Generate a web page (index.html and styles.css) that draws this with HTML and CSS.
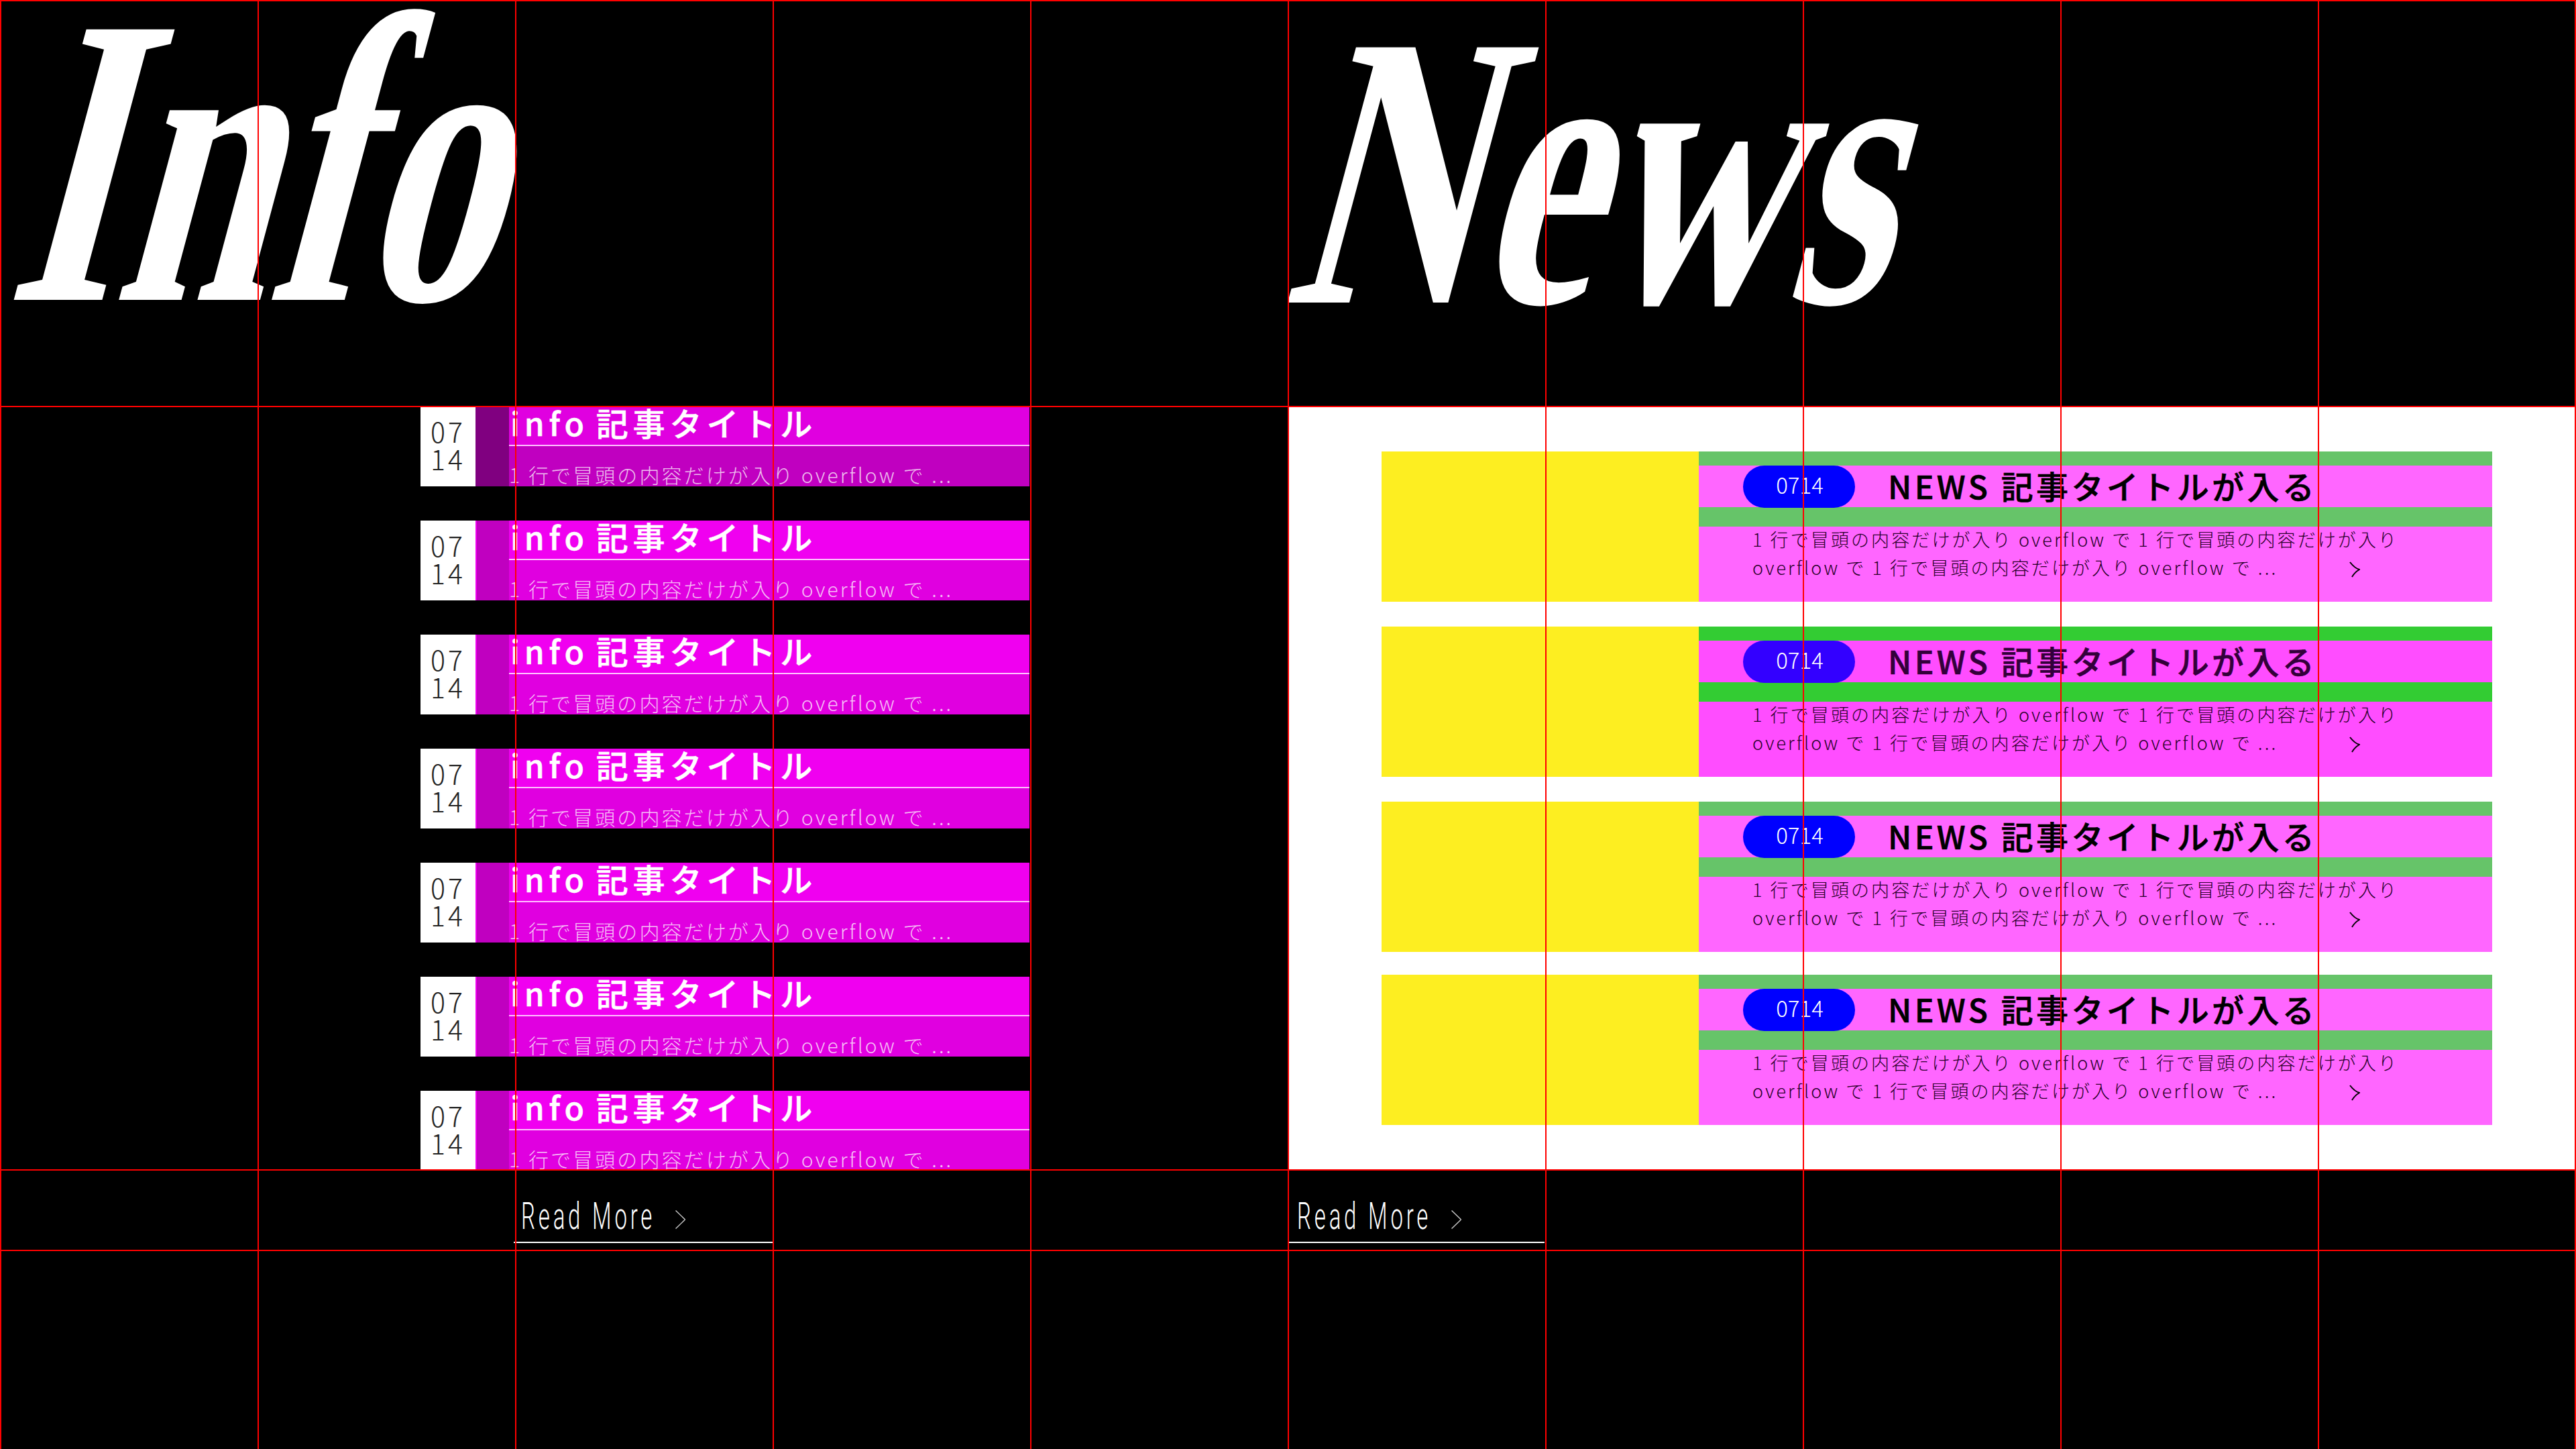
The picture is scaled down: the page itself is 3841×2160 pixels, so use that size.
FILE: index.html
```html
<!DOCTYPE html>
<html lang="ja">
<head>
  <meta charset="UTF-8">
  <title>Info / News</title>
  <link rel="stylesheet" href="styles.css">
</head>
<body>
  <div class="page">
    <section class="col col-info">
      <h2 class="big"><span class="big-info">Info</span></h2>
      <div class="info-body">
        <ul class="info-list">
          <li class="info-item first">
            <div class="date">07<br>14</div>
            <div class="side"></div>
            <div class="info-text">
              <div class="info-title">info 記事タイトル</div>
              <div class="info-desc">1 行で冒頭の内容だけが入り overflow で ...</div>
            </div>
          </li>
          <li class="info-item">
            <div class="date">07<br>14</div>
            <div class="side"></div>
            <div class="info-text">
              <div class="info-title">info 記事タイトル</div>
              <div class="info-desc">1 行で冒頭の内容だけが入り overflow で ...</div>
            </div>
          </li>
          <li class="info-item">
            <div class="date">07<br>14</div>
            <div class="side"></div>
            <div class="info-text">
              <div class="info-title">info 記事タイトル</div>
              <div class="info-desc">1 行で冒頭の内容だけが入り overflow で ...</div>
            </div>
          </li>
          <li class="info-item">
            <div class="date">07<br>14</div>
            <div class="side"></div>
            <div class="info-text">
              <div class="info-title">info 記事タイトル</div>
              <div class="info-desc">1 行で冒頭の内容だけが入り overflow で ...</div>
            </div>
          </li>
          <li class="info-item">
            <div class="date">07<br>14</div>
            <div class="side"></div>
            <div class="info-text">
              <div class="info-title">info 記事タイトル</div>
              <div class="info-desc">1 行で冒頭の内容だけが入り overflow で ...</div>
            </div>
          </li>
          <li class="info-item">
            <div class="date">07<br>14</div>
            <div class="side"></div>
            <div class="info-text">
              <div class="info-title">info 記事タイトル</div>
              <div class="info-desc">1 行で冒頭の内容だけが入り overflow で ...</div>
            </div>
          </li>
          <li class="info-item">
            <div class="date">07<br>14</div>
            <div class="side"></div>
            <div class="info-text">
              <div class="info-title">info 記事タイトル</div>
              <div class="info-desc">1 行で冒頭の内容だけが入り overflow で ...</div>
            </div>
          </li>
        </ul>
      </div>
      <a class="more more-info">
        <span class="more-label">Read More</span>
        <svg class="more-arrow" viewBox="0 0 15 28"><path d="M0.5 0.5 L14.5 14 L0.5 27.5"/></svg>
      </a>
    </section>

    <section class="col col-news">
      <h2 class="big"><span class="big-news">News</span></h2>
      <div class="news-body">
        <article class="news-item">
          <div class="thumb"></div>
          <div class="news-main">
            <div class="news-head">
              <span class="badge">0714</span>
              <span class="news-title">NEWS 記事タイトルが入る</span>
            </div>
            <div class="news-desc">
              <p>1 行で冒頭の内容だけが入り overflow で 1 行で冒頭の内容だけが入り<br>overflow で 1 行で冒頭の内容だけが入り overflow で ...</p>
              <svg class="news-arrow" viewBox="0 0 16 24"><path d="M1 1 Q8 10 15 12 Q8 16 4 23"/></svg>
            </div>
          </div>
        </article>
        <article class="news-item strong">
          <div class="thumb"></div>
          <div class="news-main">
            <div class="news-head">
              <span class="badge">0714</span>
              <span class="news-title">NEWS 記事タイトルが入る</span>
            </div>
            <div class="news-desc">
              <p>1 行で冒頭の内容だけが入り overflow で 1 行で冒頭の内容だけが入り<br>overflow で 1 行で冒頭の内容だけが入り overflow で ...</p>
              <svg class="news-arrow" viewBox="0 0 16 24"><path d="M1 1 Q8 10 15 12 Q8 16 4 23"/></svg>
            </div>
          </div>
        </article>
        <article class="news-item">
          <div class="thumb"></div>
          <div class="news-main">
            <div class="news-head">
              <span class="badge">0714</span>
              <span class="news-title">NEWS 記事タイトルが入る</span>
            </div>
            <div class="news-desc">
              <p>1 行で冒頭の内容だけが入り overflow で 1 行で冒頭の内容だけが入り<br>overflow で 1 行で冒頭の内容だけが入り overflow で ...</p>
              <svg class="news-arrow" viewBox="0 0 16 24"><path d="M1 1 Q8 10 15 12 Q8 16 4 23"/></svg>
            </div>
          </div>
        </article>
        <article class="news-item last">
          <div class="thumb"></div>
          <div class="news-main">
            <div class="news-head">
              <span class="badge">0714</span>
              <span class="news-title">NEWS 記事タイトルが入る</span>
            </div>
            <div class="news-desc">
              <p>1 行で冒頭の内容だけが入り overflow で 1 行で冒頭の内容だけが入り<br>overflow で 1 行で冒頭の内容だけが入り overflow で ...</p>
              <svg class="news-arrow" viewBox="0 0 16 24"><path d="M1 1 Q8 10 15 12 Q8 16 4 23"/></svg>
            </div>
          </div>
        </article>
      </div>
      <a class="more more-news">
        <span class="more-label">Read More</span>
        <svg class="more-arrow" viewBox="0 0 15 28"><path d="M0.5 0.5 L14.5 14 L0.5 27.5"/></svg>
      </a>
    </section>

    <!-- guide lines sit over everything -->
    <div class="guides-v">
      <i></i><i></i><i></i><i></i><i></i><i></i><i></i><i></i><i></i><i></i><i></i>
    </div>
    <div class="guides-h">
      <i class="h0"></i><i class="h1"></i><i class="h2"></i><i class="h3"></i>
    </div>
  </div>
</body>
</html>
```

FILE: styles.css
```css
* {
  box-sizing: border-box;
}

html, body {
  margin: 0;
  background: #000;
}

.page {
  position: relative;
  display: grid;
  grid-template-columns: 1920px 1921px;
  width: 3841px;
  height: 2160px;
  overflow: hidden;
  font-family: "Noto Sans CJK JP", "Noto Sans", sans-serif;
}

.col {
  display: flex;
  flex-direction: column;
}

/* big headings */
.big {
  height: 606px;
  margin: 0;
  font-family: "Liberation Serif", serif;
  font-weight: bold;
  color: #fff;
  overflow: hidden;
}

.big span {
  display: inline-block;
  line-height: 1;
}

.big-info {
  font-size: 616px;
  margin: -69px 0 0 -20px;
  transform: skewX(-15deg) scaleX(0.665);
  transform-origin: 0 100%;
}

.big-news {
  font-size: 581px;
  margin: -35px 0 0 -33px;
  transform: skewX(-15deg) scaleX(0.68);
  transform-origin: 0 100%;
}

/* info list */
.info-body {
  height: 1138px;
  padding-left: 627px;
  overflow: hidden;
}

.info-list {
  display: flex;
  flex-direction: column;
  gap: 51px;
  width: 908px;
  margin: 0;
  padding: 0;
  list-style: none;
}

.info-item {
  display: flex;
  height: 119px;
}

.date {
  width: 82px;
  padding-top: 16px;
  background: #fff;
  color: #222;
  font-size: 41px;
  font-weight: 200;
  line-height: 41px;
  letter-spacing: 4px;
  text-align: center;
}

.side {
  width: 50px;
  border-left: 2px solid #f000f0;
  background: #c000c0;
}

.info-item.first .side {
  border-left: 0;
  background: #800080;
}

.info-text {
  flex: 1;
  display: flex;
  flex-direction: column;
  overflow: hidden;
  background: #e000e0;
  color: #fff;
}

.info-item.first .info-text {
  background: #c000c0;
}

.info-title {
  flex: none;
  height: 59px;
  padding-left: 2px;
  border-bottom: 2px solid #ffc0ff;
  background: #f000f0;
  font-size: 48px;
  font-weight: 500;
  -webkit-text-stroke: 0.6px #fff;
  line-height: 46px;
  letter-spacing: 6.9px;
  word-spacing: -7px;
  white-space: nowrap;
}

.info-item.first .info-title {
  background: #e000e0;
}

.info-desc {
  flex: none;
  margin-top: 18px;
  color: rgba(255, 255, 255, 0.75);
  font-size: 30px;
  font-weight: 200;
  line-height: 48px;
  letter-spacing: 3.1px;
  white-space: nowrap;
}

/* news list */
.news-body {
  display: flex;
  flex-direction: column;
  gap: 37px;
  height: 1138px;
  margin-left: 2px;
  padding: 67px 125px 0 138px;
  background: #fff;
}

.news-item {
  display: flex;
  height: 224px;
}

.news-item.last {
  margin-top: -3px;
}

.thumb {
  width: 473px;
  background: #fdee21;
}

.news-main {
  flex: 1;
  display: flex;
  flex-direction: column;
  padding-top: 21px;
  background: #66c469;
}

.news-item.strong .news-main {
  background: #33cc33;
}

.news-head {
  display: flex;
  align-items: center;
  gap: 49px;
  height: 62px;
  padding-left: 66px;
  background: #ff66ff;
}

.news-item.strong .news-head {
  background: #ff4dff;
}

.badge {
  width: 167px;
  height: 63px;
  padding-left: 2px;
  border-radius: 32px;
  background: #0000ff;
  color: #fff;
  font-size: 33px;
  font-weight: 300;
  line-height: 57px;
  text-align: center;
}

.news-item.strong .badge {
  background: #3300ff;
}

.news-title {
  margin-bottom: 5px;
  color: #000;
  font-size: 48px;
  font-weight: 500;
  -webkit-text-stroke: 0.6px #000;
  letter-spacing: 4.4px;
  white-space: nowrap;
}

.news-item.strong .news-title {
  color: #33003a;
  -webkit-text-stroke-color: #33003a;
}

.news-desc {
  display: flex;
  height: 112px;
  margin-top: 29px;
  padding: 0 0 0 80px;
  background: #ff66ff;
  color: #2a002a;
}

.news-item.strong .news-desc {
  background: #ff4dff;
}

.news-desc p {
  width: 890px;
  margin: -2px 0 0;
  font-size: 27px;
  font-weight: 200;
  line-height: 42px;
  letter-spacing: 3.1px;
  white-space: nowrap;
}

.news-arrow {
  width: 16px;
  height: 24px;
  margin-top: 52px;
  fill: none;
  stroke: #000;
  stroke-width: 2;
}

/* read more links */
.more {
  display: flex;
  align-items: flex-start;
  height: 109px;
  padding-top: 46px;
  border-bottom: 2px solid #fff;
}

.more-info {
  width: 386px;
  margin-left: 766px;
  padding-left: 11px;
}

.more-news {
  width: 381px;
  margin-left: 2px;
  padding-left: 12px;
}

.more-label {
  display: inline-block;
  width: 230px;
  color: #fff;
  font-family: "Roboto", sans-serif;
  font-size: 55px;
  font-weight: 300;
  letter-spacing: 8px;
  line-height: 46px;
  white-space: nowrap;
  transform: scaleX(0.6);
  transform-origin: 0 50%;
}

.more-arrow {
  width: 15px;
  height: 28px;
  margin-top: 14px;
  fill: none;
  stroke: #ccc;
  stroke-width: 1.4;
}

/* guide lines */
.guides-v {
  position: absolute;
  top: 0;
  left: 0;
  display: grid;
  grid-template-columns: repeat(9, 384px) 383px 2px;
  height: 2160px;
}

.guides-v i {
  width: 2px;
  background: #f00;
}

.guides-h i {
  position: absolute;
  left: 0;
  width: 3841px;
  height: 2px;
  background: #f00;
}

.guides-h .h0 { top: 0; }
.guides-h .h1 { top: 605px; }
.guides-h .h2 { top: 1743px; }
.guides-h .h3 { top: 1863px; }
```
